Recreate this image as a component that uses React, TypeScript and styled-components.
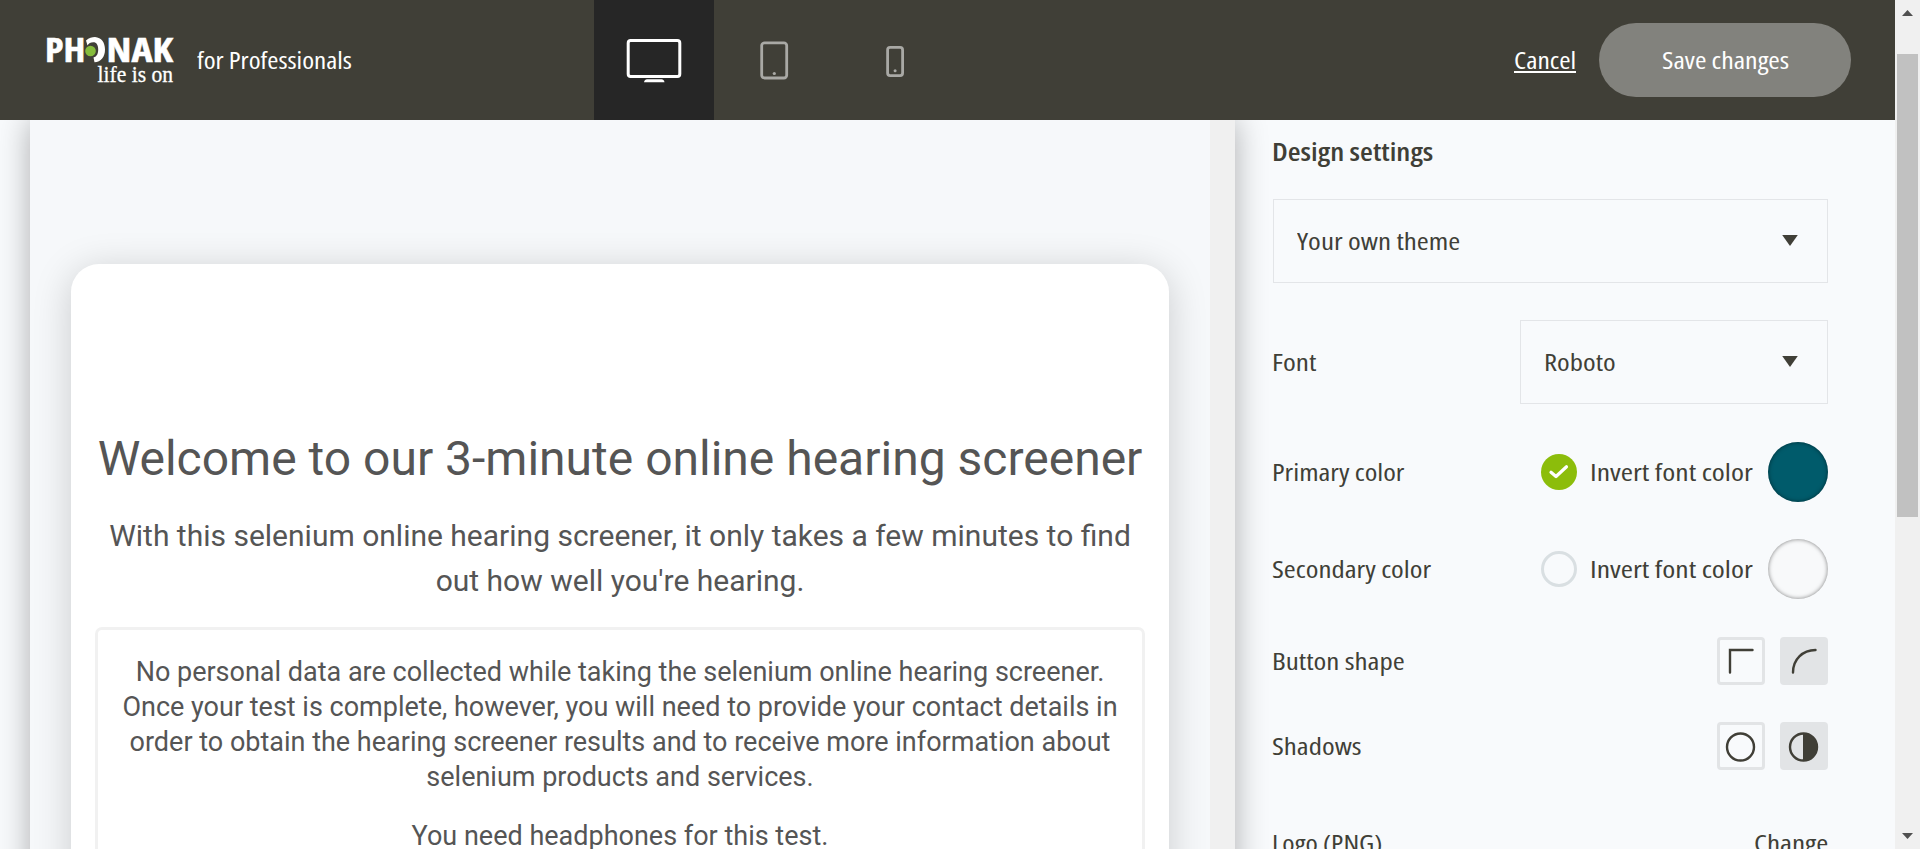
import React, { ReactNode, useLayoutEffect, useRef } from 'react';
import styled, { createGlobalStyle, css } from 'styled-components';

const ink = '#403f37';
const ui = `'Open Sans', 'Noto Sans', sans-serif`;

const GlobalStyle = createGlobalStyle`
  *, *::before, *::after { box-sizing: border-box; }
  html, body { margin: 0; height: 849px; overflow: hidden; }
  body { background: #f8fafc; color: ${ink}; font-family: ${ui}; font-stretch: 75%; }
  button { font: inherit; color: inherit; border: 0; padding: 0; background: none; }
  p, h1, h2 { margin: 0; font-weight: 400; }
`;

const Frame = styled.div`
  display: flex;
  width: 1920px;
  height: 849px;
  overflow: hidden;
`;

const Page = styled.div`
  display: flex;
  flex-direction: column;
  width: 1895px;
  height: 849px;
`;

/* ---------- condensed labels ---------- */

const FitBox = styled.span<{ $width: number }>`
  display: block;
  flex: none;
  width: ${(p) => p.$width}px;
  text-align: left;
  white-space: nowrap;
`;

const FitInner = styled.span`
  display: inline-block;
  transform-origin: 0 50%;
`;

function Fit({ width, children }: { width: number; children: ReactNode }) {
  const ref = useRef<HTMLSpanElement>(null);
  useLayoutEffect(() => {
    const el = ref.current;
    if (el) el.style.transform = `scaleX(${width / el.offsetWidth})`;
  }, [width]);
  return (
    <FitBox $width={width}>
      <FitInner ref={ref}>{children}</FitInner>
    </FitBox>
  );
}

/* ---------- header ---------- */

const Header = styled.header`
  position: relative;
  z-index: 2;
  display: flex;
  align-items: center;
  flex: none;
  height: 120px;
  padding-left: 47px;
  background: ${ink};
  color: #fff;
  font-size: 23px;
  line-height: 32px;
`;

const Brand = styled.div`
  display: flex;
  align-items: center;
  width: 547px;
  gap: 24px;
`;

const LogoSvg = styled.svg`
  display: block;
  flex: none;
  overflow: visible;
`;

const Devices = styled.nav`
  display: flex;
`;

const DeviceTab = styled.button<{ $active?: boolean }>`
  display: flex;
  align-items: center;
  justify-content: center;
  width: 120px;
  height: 120px;
  color: ${(p) => (p.$active ? '#fff' : '#a9a9a5')};
  background: ${(p) => (p.$active ? '#262626' : 'transparent')};
`;

const Actions = styled.div`
  display: flex;
  align-items: center;
  gap: 23px;
  margin-left: auto;
  padding-right: 44px;
`;

const Cancel = styled.button`
  height: 25px;
  line-height: 24px;
  border-bottom: 2px solid #fff;
`;

const Save = styled.button`
  display: flex;
  align-items: center;
  justify-content: center;
  width: 252px;
  height: 74px;
  border-radius: 37px;
  background: #82827d;
`;

/* ---------- preview ---------- */

const Main = styled.main`
  display: flex;
  flex: 1;
  min-height: 0;
  padding-left: 30px;
`;

const Preview = styled.section`
  display: flex;
  flex: none;
  width: 1205px;
  height: 800px;
  background: #f6f8fa;
  border-right: 25px solid #f0f0f0;
  box-shadow: 0 0 30px rgba(0, 0, 0, 0.31);
  padding: 144px 41px 0;
  overflow: hidden;
`;

const Card = styled.article`
  width: 1098px;
  height: 900px;
  padding: 161px 24px 0;
  background: #fff;
  border-radius: 28px;
  box-shadow: 0 6px 38px rgba(0, 0, 0, 0.18);
  color: #555;
  font-family: Roboto, sans-serif;
  font-stretch: 100%;
  text-align: center;
`;

const Title = styled.h1`
  font-size: 48px;
  line-height: 68px;
  white-space: nowrap;
`;

const Lead = styled.p`
  margin-top: 20px;
  font-size: 30px;
  line-height: 45px;
`;

const Notice = styled.div`
  height: 400px;
  margin-top: 24px;
  padding: 25px 20px;
  border: 3px solid #f1f1f1;
  border-radius: 7px;
  font-size: 27px;
  line-height: 35px;
  p + p { margin-top: 24px; }
`;

/* ---------- settings ---------- */

const Settings = styled.aside`
  display: flex;
  flex-direction: column;
  width: 556px;
  margin-left: 37px;
  font-size: 24px;
  line-height: 34px;
  font-weight: 375;
`;

const Heading = styled.h2`
  flex: none;
  padding-top: 13px;
  height: 79px;
  font-size: 26px;
  line-height: 36px;
  font-weight: 600;
`;

const Select = styled.div<{ $width: number }>`
  display: flex;
  align-items: center;
  justify-content: space-between;
  flex: none;
  width: ${(p) => p.$width}px;
  height: 84px;
  margin-left: auto;
  padding: 0 29px 1px 23px;
  border: 1px solid #e3e5e8;
`;

const Row = styled.div<{ $height: number; $gap: number }>`
  display: flex;
  align-items: center;
  justify-content: space-between;
  flex: none;
  height: ${(p) => p.$height}px;
  margin-top: ${(p) => p.$gap}px;
`;

const Controls = styled.div<{ $gap: number }>`
  display: flex;
  align-items: center;
  gap: ${(p) => p.$gap}px;
`;

const Check = styled.span<{ $checked?: boolean }>`
  display: flex;
  width: 36px;
  height: 36px;
  margin-right: -1px;
  border-radius: 50%;
  ${(p) =>
    p.$checked
      ? css`background: #8cbd0b;`
      : css`border: 3px solid #d9dfe2;`}
`;

const Swatch = styled.span<{ $color: string }>`
  width: 60px;
  height: 60px;
  margin-left: 1px;
  border-radius: 50%;
  background: ${(p) => p.$color};
  box-shadow: inset 0 0 4px rgba(0, 0, 0, 0.5);
`;

const Option = styled.button<{ $selected?: boolean }>`
  display: flex;
  width: 48px;
  height: 48px;
  border-radius: 4px;
  border: 3px solid #e2e4e6;
  background: ${(p) => (p.$selected ? '#e2e4e6' : 'transparent')};
`;

/* ---------- scrollbar ---------- */

const Scrollbar = styled.div`
  display: flex;
  flex-direction: column;
  align-items: center;
  width: 25px;
  height: 849px;
  background: #f0f0f0;
`;

const ArrowSlot = styled.div`
  height: 16px;
  padding-top: 10px;
  line-height: 0;
`;

const Thumb = styled.div`
  width: 21px;
  height: 463px;
  margin: 38px 0 316px;
  background: #c1c1c1;
`;

/* ---------- drawings ---------- */

const Logo = () => (
  <LogoSvg width="126" height="50" viewBox="47 35 126 50" fill="#fff">
    <g fontFamily="Open Sans" fontWeight="700" fontSize="33.5" stroke="#fff" strokeWidth="0.5">
      <text x="45" y="62" textLength="40.5" lengthAdjust="spacingAndGlyphs">PH</text>
      <text x="106.5" y="62" textLength="66.5" lengthAdjust="spacingAndGlyphs">NAK</text>
    </g>
    <path d="M86 40.500C89 37.800 92 37 95 37C101.500 37.500 105 42.500 105 49.500C105 57 101 62 94.500 62.200L93.500 57.500C97 56.500 98.200 53.500 98.200 49.500C98.200 45 96.500 42.300 93.300 42.300C90.500 42.300 88.800 43.500 87.500 45.500Z" />
    <circle cx="90.500" cy="51" r="5.300" fill="#86bc3c" />
    <text x="97.500" y="82" fontFamily="Liberation Serif" fontSize="23" stroke="#fff" strokeWidth="0.3" textLength="75.500" lengthAdjust="spacingAndGlyphs">life is on</text>
  </LogoSvg>
);

const Monitor = () => (
  <svg width="56" height="46" viewBox="0 0 56 46" fill="none" stroke="currentColor" strokeWidth="3">
    <rect x="2.200" y="3.500" width="51.600" height="36" rx="2.500" />
    <path d="M18 45.200C18.500 43 19.500 42.300 21 42.300H35.500C37 42.300 38 43 38.500 45.200Z" fill="currentColor" stroke="none" />
  </svg>
);

const Tablet = () => (
  <svg width="30" height="42" viewBox="0 0 30 42" fill="none" stroke="currentColor" strokeWidth="2.800">
    <rect x="2.700" y="3.800" width="25" height="35.200" rx="2.800" />
    <circle cx="15.300" cy="34.500" r="1.600" fill="currentColor" stroke="none" />
  </svg>
);

const Phone = () => (
  <svg width="22" height="36" viewBox="0 0 22 36" fill="none" stroke="currentColor" strokeWidth="2.800">
    <rect x="4.600" y="5.400" width="15" height="28.200" rx="2.500" />
    <circle cx="12.100" cy="28.700" r="1.500" fill="currentColor" stroke="none" />
  </svg>
);

const Caret = () => (
  <svg width="16" height="11" viewBox="0 0 16 11" fill={ink}>
    <path d="M0.200 0H15.800L8 11Z" />
  </svg>
);

const Tick = () => (
  <svg width="36" height="36" viewBox="0 0 36 36" fill="none" stroke="#fff" strokeWidth="3.200" strokeLinecap="round" strokeLinejoin="round">
    <path d="M10 18.200L15 22.500L25.500 12.800" />
  </svg>
);

const Glyph = ({ children }: { children: ReactNode }) => (
  <svg width="42" height="42" viewBox="3 3 42 42" fill="none" stroke={ink} strokeWidth="2.400" strokeLinecap="round">
    {children}
  </svg>
);

const Arrow = ({ up }: { up?: boolean }) => (
  <svg width="11" height="6" viewBox="0 0 11 6" fill="#505050">
    <path d={up ? 'M0 6L5.500 0L11 6Z' : 'M0 0L5.500 6L11 0Z'} />
  </svg>
);

export default function App() {
  return (
    <Frame>
      <GlobalStyle />
      <Page>
        <Header>
          <Brand>
            <Logo />
            <Fit width={155}>for Professionals</Fit>
          </Brand>
          <Devices>
            <DeviceTab $active><Monitor /></DeviceTab>
            <DeviceTab><Tablet /></DeviceTab>
            <DeviceTab><Phone /></DeviceTab>
          </Devices>
          <Actions>
            <Cancel><Fit width={62}>Cancel</Fit></Cancel>
            <Save><Fit width={127}>Save changes</Fit></Save>
          </Actions>
        </Header>
        <Main>
          <Preview>
            <Card>
              <Title>Welcome to our 3-minute online hearing screener</Title>
              <Lead>With this selenium online hearing screener, it only takes a few minutes to find out how well you're hearing.</Lead>
              <Notice>
                <p>
                  No personal data are collected while taking the selenium online hearing screener. Once your test is
                  complete, however, you will need to provide your contact details in order to obtain the hearing
                  screener results and to receive more information about selenium products and services.
                </p>
                <p>You need headphones for this test.</p>
              </Notice>
            </Card>
          </Preview>
          <Settings>
            <Heading><Fit width={161}>Design settings</Fit></Heading>
            <Select $width={555}>
              <Fit width={163}>Your own theme</Fit>
              <Caret />
            </Select>
            <Row $height={84} $gap={37}>
              <Fit width={45}>Font</Fit>
              <Select $width={308}>
                <Fit width={72}>Roboto</Fit>
                <Caret />
              </Select>
            </Row>
            <Row $height={60} $gap={38}>
              <Fit width={133}>Primary color</Fit>
              <Controls $gap={14}>
                <Check $checked><Tick /></Check>
                <Fit width={163}>Invert font color</Fit>
                <Swatch $color="#005b6b" />
              </Controls>
            </Row>
            <Row $height={60} $gap={37}>
              <Fit width={159}>Secondary color</Fit>
              <Controls $gap={14}>
                <Check />
                <Fit width={163}>Invert font color</Fit>
                <Swatch $color="#f8f9fa" />
              </Controls>
            </Row>
            <Row $height={48} $gap={38}>
              <Fit width={133}>Button shape</Fit>
              <Controls $gap={15}>
                <Option><Glyph><path d="M13 35.500V13H35.500" /></Glyph></Option>
                <Option $selected><Glyph><path d="M13 35.500C13 22.500 22.500 13 35.500 13" /></Glyph></Option>
              </Controls>
            </Row>
            <Row $height={48} $gap={37}>
              <Fit width={89}>Shadows</Fit>
              <Controls $gap={15}>
                <Option><Glyph><circle cx="23.500" cy="25" r="13.500" /></Glyph></Option>
                <Option $selected>
                  <Glyph>
                    <circle cx="23.500" cy="25" r="13.500" />
                    <path d="M23 11.500A13.500 13.500 0 0 1 23 38.500Z" fill={ink} stroke="none" />
                  </Glyph>
                </Option>
              </Controls>
            </Row>
            <Row $height={48} $gap={49}>
              <Fit width={111}>Logo (PNG)</Fit>
              <Fit width={74}>Change</Fit>
            </Row>
          </Settings>
        </Main>
      </Page>
      <Scrollbar>
        <ArrowSlot><Arrow up /></ArrowSlot>
        <Thumb />
        <Arrow />
      </Scrollbar>
    </Frame>
  );
}
